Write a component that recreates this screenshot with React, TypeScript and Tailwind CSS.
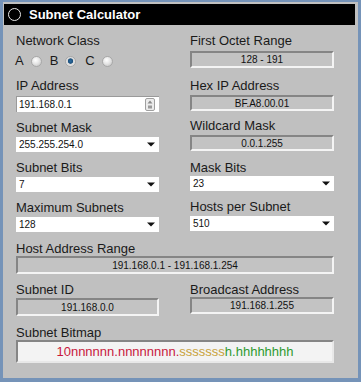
import React from 'react';

const font = { fontFamily: '"Liberation Sans", Arial, sans-serif' };

const Label = ({ children }: { children: React.ReactNode }) => (
  <div className="h-4 leading-4 text-[13px] text-[#1a1a1a] whitespace-nowrap">{children}</div>
);

const ReadBox = ({ value, className = '' }: { value: string; className?: string }) => (
  <div
    className={`flex items-center justify-center border-2 border-t-[#858585] border-l-[#858585] border-b-[#f4f4f4] border-r-[#f4f4f4] bg-[#c3c3c3] text-[10px] text-[#111] ${className}`}
  >
    {value}
  </div>
);

const Select = ({ value, className = '' }: { value: string; className?: string }) => (
  <div className={`flex items-center justify-between bg-white pl-[3px] pr-[4px] h-[15px] text-[10px] text-[#111] ${className}`}>
    <span>{value}</span>
    <svg width="8" height="5" viewBox="0 0 8 5">
      <path d="M0 0.5 L8 0.5 L4 4.5 Z" fill="#111" />
    </svg>
  </div>
);

const Radio = ({ checked }: { checked?: boolean }) => (
  <span
    className={`inline-block w-[11px] h-[11px] rounded-full border border-[#a8a8a8] ${
      checked
        ? 'bg-[radial-gradient(circle_at_50%_45%,#2d6fa3_0,#1b4f7c_35%,#d8d8d8_45%,#f2f2f2_100%)]'
        : 'bg-[radial-gradient(circle_at_40%_35%,#ffffff_0,#e6e6e6_45%,#bdbdbd_100%)]'
    }`}
  />
);

export default function App() {
  return (
    <div className="w-[361px] h-[382px] bg-[#7593b8] pl-[3px] pr-[3px] pt-[2px] pb-[4px]" style={font}>
      <div className="h-full bg-[#c0c0c0] flex flex-col">
        {/* title bar */}
        <div className="ml-[1px] mr-[3px] mt-[2px] h-[21px] bg-black flex items-center pl-[4px] gap-[8px]">
          <span className="w-[13px] h-[13px] rounded-full border-[1.5px] border-[#e8e8e8] bg-black" />
          <span className="text-white font-bold text-[13px] leading-4">Subnet Calculator</span>
        </div>

        <div className="pl-[13px] pt-[8px] flex gap-[31px]">
          {/* left column */}
          <div className="w-[143px] flex flex-col">
            <div className="h-[45px]">
              <Label>Network Class</Label>
              <div className="mt-[4px] flex items-center text-[13px] leading-4 text-[#1a1a1a] -ml-[1px]">
                <span>A</span>
                <span className="ml-[7px] flex"><Radio /></span>
                <span className="ml-[8px]">B</span>
                <span className="ml-[7px] flex"><Radio checked /></span>
                <span className="ml-[9px]">C</span>
                <span className="ml-[7px] flex"><Radio /></span>
              </div>
            </div>
            <div className="h-[42px]">
              <Label>IP Address</Label>
              <div className="mt-[2px] h-[16px] bg-white border-l border-t border-[#9a9a9a] flex items-center justify-between pl-[2px] pr-[4px] text-[10px] text-[#111]">
                <span>191.168.0.1</span>
                <svg width="10" height="13" viewBox="0 0 10 13">
                  <rect x="0.5" y="0.5" width="9" height="12" rx="1.5" fill="#ececec" stroke="#a0a0a0" />
                  <path d="M5 2.5 L7.5 5.5 L2.5 5.5 Z" fill="#8a8a8a" />
                  <rect x="3" y="7.5" width="4" height="3" fill="#9a9a9a" />
                </svg>
              </div>
            </div>
            <div className="h-[40px]">
              <Label>Subnet Mask</Label>
              <Select value="255.255.254.0" className="mt-[1px]" />
            </div>
            <div className="h-[40px]">
              <Label>Subnet Bits</Label>
              <Select value="7" className="mt-[1px]" />
            </div>
            <div className="h-[41px]">
              <Label>Maximum Subnets</Label>
              <Select value="128" className="mt-[1px]" />
            </div>
          </div>

          {/* right column */}
          <div className="w-[144px] flex flex-col">
            <div className="h-[45px]">
              <Label>First Octet Range</Label>
              <ReadBox value="128 - 191" className="mt-[2px] h-[17px]" />
            </div>
            <div className="h-[40px]">
              <Label>Hex IP Address</Label>
              <ReadBox value="BF.A8.00.01" className="mt-[1px] h-[16px]" />
            </div>
            <div className="h-[42px]">
              <Label>Wildcard Mask</Label>
              <ReadBox value="0.0.1.255" className="mt-[1px] h-[16px]" />
            </div>
            <div className="h-[39px]">
              <Label>Mask Bits</Label>
              <Select value="23" className="mt-0" />
            </div>
            <div className="h-[42px]">
              <Label>Hosts per Subnet</Label>
              <Select value="510" className="mt-[1px]" />
            </div>
          </div>
        </div>

        <div className="pl-[13px] w-[331px]">
          <div className="h-[41px]">
            <Label>Host Address Range</Label>
            <ReadBox value="191.168.0.1 - 191.168.1.254" className="mt-[-1px] h-[18px]" />
          </div>
          <div className="flex gap-[31px] h-[43px]">
            <div className="w-[143px]">
              <Label>Subnet ID</Label>
              <ReadBox value="191.168.0.0" className="mt-0 h-[18px]" />
            </div>
            <div className="w-[144px]">
              <Label>Broadcast Address</Label>
              <ReadBox value="191.168.1.255" className="mt-[-1px] h-[17px]" />
            </div>
          </div>
          <div>
            <Label>Subnet Bitmap</Label>
            <div className="mt-[-1px] h-[23px] flex items-center justify-center border-2 border-t-[#858585] border-l-[#858585] border-b-[#e8e8e8] border-r-[#e8e8e8] bg-[#f3f3f3] text-[13px]">
              <span className="text-[#c8183c]">10nnnnnn.nnnnnnnn.</span>
              <span className="text-[#c9a23a]">sssssss</span>
              <span className="text-[#2f9a2f]">h.hhhhhhhh</span>
            </div>
          </div>
        </div>
      </div>
    </div>
  );
}
